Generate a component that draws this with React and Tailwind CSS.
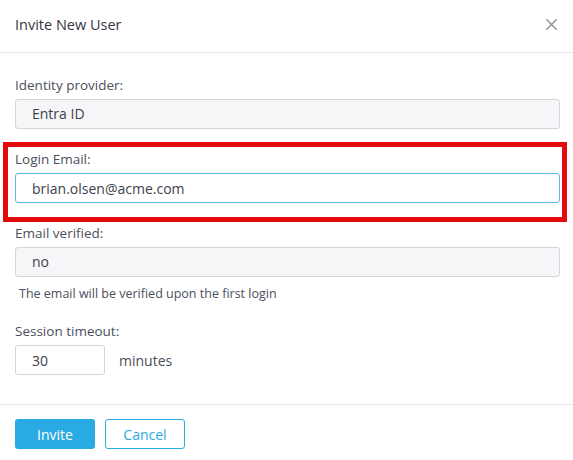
import React from 'react';

const font = { fontFamily: '"Open Sans", "Liberation Sans", sans-serif' };

const Field = ({ label, children }) => (
  <div className="flex flex-col">
    <label className="h-5 mb-1 text-[13.5px] leading-5 text-[#4b4f5c]">{label}</label>
    {children}
  </div>
);

const ReadOnlyInput = ({ value }) => (
  <div className="h-[30px] rounded-[3px] border border-[#d3d4dc] bg-[#f6f6f8] pl-4 text-[14px] leading-[28px] text-[#3b3f4c]">
    {value}
  </div>
);

export default function App() {
  return (
    <div className="w-[573px] h-[460px] overflow-hidden bg-white" style={font}>
      {/* header */}
      <div className="flex h-[53px] items-center justify-between border-b border-[#e8e9ee] pb-[3px] pl-[15px] pr-[14px]">
        <h2 className="text-[14.5px] font-medium text-[#333844]">Invite New User</h2>
        <button type="button" aria-label="Close" className="flex h-4 w-4 items-center justify-center">
          <svg width="11" height="11" viewBox="0 0 11 11" fill="none">
            <path d="M0.8 0.8L10.2 10.2M10.2 0.8L0.8 10.2" stroke="#8f9096" strokeWidth="1.4" strokeLinecap="round" />
          </svg>
        </button>
      </div>

      {/* body */}
      <div className="flex flex-col gap-5 pl-[15px] pr-[13px] pt-[22px] pb-[29px]">
        <Field label="Identity provider:">
          <ReadOnlyInput value="Entra ID" />
        </Field>

        <div className="relative">
          <Field label="Login Email:">
            <input
              type="text"
              defaultValue="brian.olsen@acme.com"
              className="h-[30px] rounded-[3px] border border-[#5cbde9] bg-white pl-4 text-[14px] text-[#3b3f4c] outline-none"
            />
          </Field>
          {/* annotation */}
          <div className="pointer-events-none absolute -top-[7px] -left-[12px] -right-[7px] -bottom-[19px] border-[5px] border-[#e20a0a]" />
        </div>

        <div className="flex flex-col">
          <Field label="Email verified:">
            <ReadOnlyInput value="no" />
          </Field>
          <p className="mt-2 pl-1 text-[12.5px] leading-[18px] text-[#4b4f5c]">
            The email will be verified upon the first login
          </p>
        </div>

        <div className="-mt-[2px]">
          <Field label="Session timeout:">
            <div className="flex items-center gap-[14px]">
              <input
                type="text"
                defaultValue="30"
                className="h-[30px] w-[90px] rounded-[3px] border border-[#d3d4dc] bg-white pl-4 text-[14px] text-[#3b3f4c] outline-none"
              />
              <span className="text-[14px] text-[#4b4f5c]">minutes</span>
            </div>
          </Field>
        </div>
      </div>

      {/* footer */}
      <div className="flex gap-[10px] border-t border-[#e8e9ee] px-[15px] pt-[14px]">
        <button
          type="button"
          className="h-[30px] w-[80px] rounded-[3px] bg-[#2aaae2] text-[14px] font-medium text-white"
        >
          Invite
        </button>
        <button
          type="button"
          className="h-[30px] w-[80px] rounded-[3px] border border-[#2aaae2] bg-white text-[14px] text-[#2aaae2]"
        >
          Cancel
        </button>
      </div>
    </div>
  );
}
